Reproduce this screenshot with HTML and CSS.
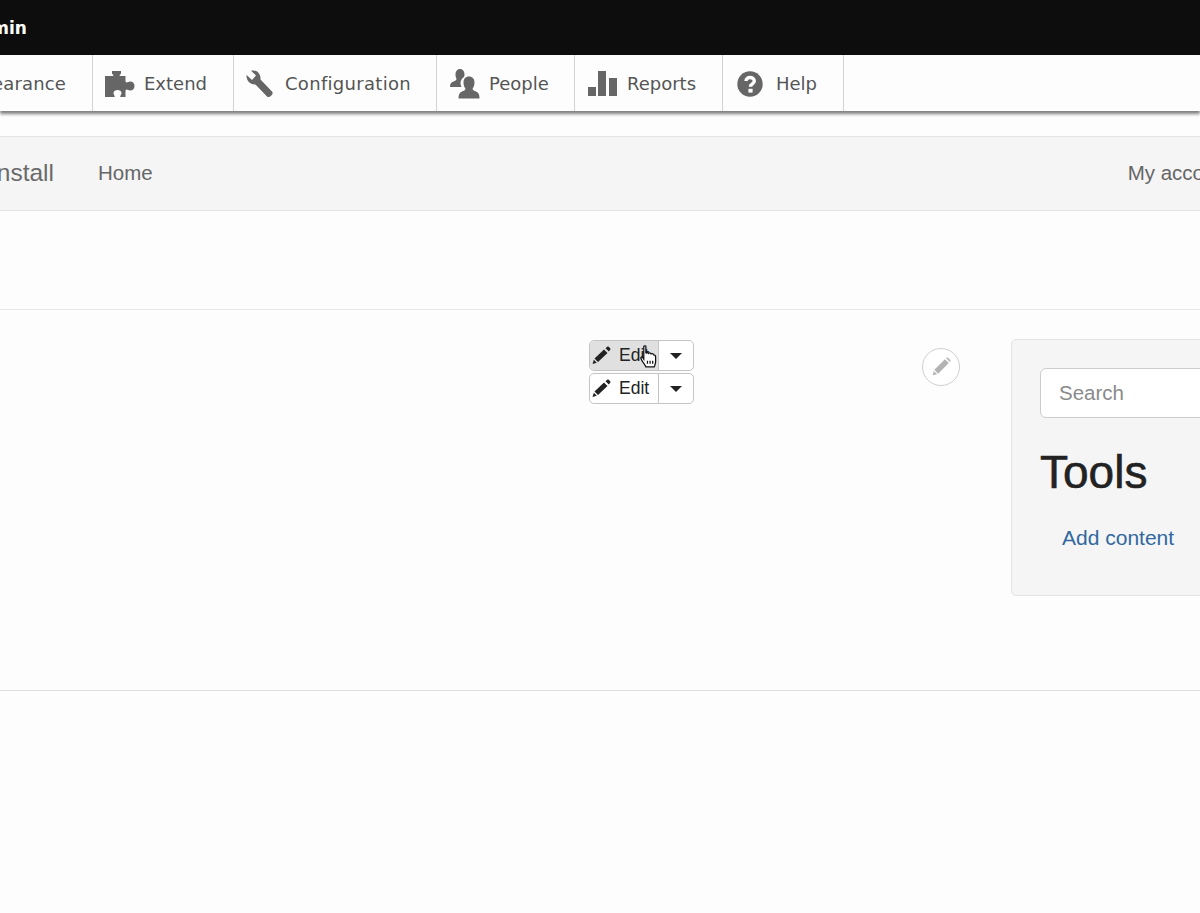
FILE: index.html
```html
<!DOCTYPE html>
<html lang="en">
<head>
<meta charset="utf-8">
<title>Admin</title>
<link rel="stylesheet" href="styles.css">
</head>
<body>
<header class="admin-bar"><span class="admin-name">Admin</span></header>
<nav class="toolbar">
  <a class="tool tool-first"><span class="tool-label">Appearance</span></a>
  <a class="tool tool-extend">
    <svg class="tool-icon" width="30" height="26" viewBox="0 0 30 26"><path d="M0 5H7.500C9 5 8.500 3.500 7 2.800V0H16V2.800C14.500 3.500 14 5 15.500 5H20.500V10.500C21.500 12.500 23 10.500 25 10.500C28 10.500 29.500 12.500 29.500 15C29.500 17.500 28 19.500 25 19.500C23 19.500 21.500 17.500 20.500 19.500V26H15.500C14.500 25 16.500 24 16.500 22C16.500 20 14.500 19 12.500 19C10.500 19 8.500 20 8.500 22C8.500 24 10.500 25 9.500 26H0Z"/></svg>
    <span class="tool-label">Extend</span>
  </a>
  <a class="tool tool-config">
    <svg class="tool-icon" width="28" height="28" viewBox="0 0 28 28"><path d="M5 .8L10 5.500L6 10L.6 5C0 10 4 15 9.500 14.500L21 26.500C23 28.500 28.500 24 26 21.500L14.500 9.500C15 4 11-1 5 .8Z"/></svg>
    <span class="tool-label">Configuration</span>
  </a>
  <a class="tool tool-people">
    <svg class="tool-icon" width="30" height="30" viewBox="0 0 30 30"><path d="M10 0C13 0 14.500 2.500 14.500 5.500C14.500 6.500 14.300 7.300 14 8C12 9 10.500 11.500 10.500 14C10.500 15.500 10.800 16.800 11.500 18H0C0 15 .8 13.500 3.500 12.500C5.500 11.800 6.500 11 6.500 9.500C5.500 8 5.500 6.500 5.500 5.500C5.500 2.500 7 0 10 0Z"/><path d="M19 7.500C22.500 7.500 24.500 10 24.500 13.500C24.500 16 23.800 18 22.600 19.500C22.600 21 23.500 21.500 25.500 22.300C28.500 23.300 29.500 25.500 29.500 29.500H8.500C8.500 25.500 9.500 23.300 12.500 22.300C14.500 21.500 15.400 21 15.400 19.500C14.200 18 13.500 16 13.500 13.500C13.500 10 15.500 7.500 19 7.500Z"/></svg>
    <span class="tool-label">People</span>
  </a>
  <a class="tool tool-reports">
    <svg class="tool-icon" width="30" height="26" viewBox="0 0 30 26"><path d="M0 16H8V25H0ZM10 0H18V25H10ZM21 7H29V25H21Z"/></svg>
    <span class="tool-label">Reports</span>
  </a>
  <a class="tool tool-help">
    <svg class="tool-icon" width="26" height="26" viewBox="0 0 26 26"><circle cx="13" cy="13" r="12.700"/><path class="help-mark" d="M9 10C9 7.500 11 6.500 13 6.500C15.500 6.500 17.300 8 17.300 10C17.300 13 13.500 12.800 13.500 15.800"/><rect class="help-dot" x="11.400" y="17.800" width="4.200" height="3.800"/></svg>
    <span class="tool-label">Help</span>
  </a>
</nav>
<nav class="site-nav">
  <span class="site-name">Drupal Install</span>
  <a class="site-home">Home</a>
  <a class="site-account">My account</a>
</nav>
<main class="content">
  <section class="main-col">
    <div class="edit-stack">
      <div class="edit-group edit-hover">
        <button class="edit-btn">
          <svg class="pencil" width="19" height="19" viewBox="0 0 19 19"><path d="M12 3.500L15.500 7L6 16L2.500 12.500ZM13.500 2.200L15.200 .8C15.700 .4 16.300 .4 16.700 .8L18.200 2.200C18.600 2.700 18.600 3.200 18.200 3.700L16.800 5.500ZM1.800 13.800L4.800 16.800L.5 18Z"/></svg>
          <span>Edit</span>
        </button>
        <button class="caret-btn"><span class="caret"></span></button>
        <svg class="hand" width="17" height="23" viewBox="0 0 16 22"><path d="M3.500 1.500C3.500 .5 5.500 .5 5.500 1.500V8C6 7 7.500 7 8 8C8.500 7.300 10 7.300 10.500 8.500C11 8 12.800 8 13 9.500C14 9.500 14.800 10 14.800 11.500V16C14.800 18 14 19 13.500 21H5.500C5 19 3.500 17.500 2 15.500L.8 13C.3 11.500 1.800 11 2.500 12L3.500 13.500Z"/><path d="M7 15V18M9.500 15V18M12 15V18"/></svg>
      </div>
      <div class="edit-group">
        <button class="edit-btn">
          <svg class="pencil" width="19" height="19" viewBox="0 0 19 19"><path d="M12 3.500L15.500 7L6 16L2.500 12.500ZM13.500 2.200L15.200 .8C15.700 .4 16.300 .4 16.700 .8L18.200 2.200C18.600 2.700 18.600 3.200 18.200 3.700L16.800 5.500ZM1.800 13.800L4.800 16.800L.5 18Z"/></svg>
          <span>Edit</span>
        </button>
        <button class="caret-btn"><span class="caret"></span></button>
      </div>
    </div>
    <span class="edit-circle">
      <svg width="20" height="20" viewBox="0 0 18 18"><path d="M12.500 2L16 5.500L6.500 15L3 11.500ZM13.800 .8C14.300 .3 15 .3 15.500 .8L17.200 2.500C17.700 3 17.700 3.700 17.200 4.200L17 4.500L13.500 1ZM2.500 12.500L5.500 15.500L1.500 16.500Z"/></svg>
    </span>
  </section>
  <aside class="sidebar">
    <input class="search" type="text" placeholder="Search">
    <h2 class="sidebar-title">Tools</h2>
    <a class="sidebar-link">Add content</a>
  </aside>
</main>
</body>
</html>
```
FILE: styles.css
```css
* { box-sizing: border-box; }
html, body { margin: 0; height: 913px; overflow: hidden; }
body {
  background: #fdfdfd;
  font-family: "Liberation Sans", Arial, sans-serif;
  width: 1200px;
}
.admin-bar {
  height: 55px;
  background: #0d0d0d;
  color: #fff;
  display: flex;
  align-items: center;
  padding-top: 1px;
  overflow: hidden;
}
.admin-name {
  font: bold 17px "DejaVu Sans", sans-serif;
  margin-left: -34px;
}
.toolbar {
  height: 56px;
  background: #fdfdfd;
  display: flex;
  overflow: hidden;
  box-shadow: 0 3px 3px rgba(60, 60, 60, .65);
  position: relative;
}
.tool {
  display: flex;
  align-items: center;
  flex: none;
  height: 56px;
  border-right: 1px solid #d2d2d2;
  color: #555;
  padding-top: 1px;
}
.tool-icon { fill: #666; flex: none; }
.tool-label {
  font: 18px "DejaVu Sans", sans-serif;
  letter-spacing: 0;
  white-space: nowrap;
}
.tool-first { width: 93px; justify-content: flex-end; padding-right: 26px; }
.tool-first .tool-label { letter-spacing: .15px; }
.tool-extend { width: 141px; padding-left: 12px; gap: 9px; }
.tool-config { width: 203px; padding-left: 12px; gap: 11px; }
.tool-config .tool-label { letter-spacing: .3px; }
.tool-people { width: 138px; padding-left: 13px; gap: 9px; }
.tool-reports { width: 148px; padding-left: 13px; gap: 9px; }
.tool-help { width: 121px; padding-left: 14px; gap: 13px; }
.help-mark { fill: none; stroke: #fdfdfd; stroke-width: 3.400; }
.help-dot { fill: #fdfdfd; }
.site-nav {
  margin-top: 25px;
  height: 75px;
  background: #f5f5f5;
  border-top: 1px solid #e4e4e4;
  border-bottom: 1px solid #e4e4e4;
  display: flex;
  align-items: center;
  padding-bottom: 2px;
  color: #666;
  overflow: hidden;
  white-space: nowrap;
}
.site-name {
  font-size: 24.500px;
  flex: none;
  width: 54px;
  direction: rtl;
  overflow: hidden;
  color: #6a6a6a;
}
.site-home { font-size: 20.500px; margin-left: 44px; color: #666; }
.site-account { font-size: 20.500px; margin-left: 975px; flex: none; color: #666; }
.content {
  margin-top: 98px;
  height: 382px;
  border-top: 1px solid #e9e9e9;
  border-bottom: 1px solid #dfdfdf;
  display: flex;
  align-items: flex-start;
  padding-top: 29px;
  overflow: hidden;
}
.main-col {
  width: 1011px;
  flex: none;
  display: flex;
  align-items: flex-start;
  padding-left: 589px;
}
.edit-stack { display: flex; flex-direction: column; gap: 2px; padding-top: 1px; }
.edit-group {
  position: relative;
  display: flex;
  width: 105px;
  height: 31px;
  background: #fff;
  border: 1px solid #c4c4c4;
  border-radius: 5px;
}
.edit-btn, .caret-btn {
  font: 17.500px "Liberation Sans", Arial, sans-serif;
  color: #222;
  background: transparent;
  border: 0;
  padding: 0;
  display: flex;
  align-items: center;
}
.edit-btn { width: 69px; padding-left: 2px; gap: 8px; border-right: 1px solid #c4c4c4; }
.caret-btn { flex: 1; justify-content: center; }
.pencil { fill: #222; flex: none; }
.caret {
  width: 0;
  height: 0;
  border-left: 6px solid transparent;
  border-right: 6px solid transparent;
  border-top: 6px solid #222;
}
.edit-hover .edit-btn { background: #e0e0e0; border-radius: 4px 0 0 4px; }
.hand {
  position: absolute;
  left: 50px;
  top: 4px;
  fill: #fff;
  stroke: #111;
  stroke-width: 1.200;
}
.edit-circle {
  width: 38px;
  height: 38px;
  margin: 9px 0 0 228px;
  border: 1px solid #cfcfcf;
  border-radius: 50%;
  background: #fff;
  display: flex;
  align-items: center;
  justify-content: center;
  flex: none;
}
.edit-circle svg { fill: #b3b3b3; }
.sidebar {
  width: 300px;
  flex: none;
  height: 257px;
  background: #f5f5f5;
  border: 1px solid #e3e3e3;
  border-radius: 5px;
  padding: 28px 0 0 28px;
}
.search {
  display: block;
  width: 260px;
  height: 50px;
  border: 1px solid #ccc;
  border-radius: 6px;
  background: #fff;
  padding: 0 18px;
  font: 20.500px "Liberation Sans", Arial, sans-serif;
}
.search::placeholder { color: #8a8a8a; opacity: 1; }
.sidebar-title {
  margin: 29px 0 0;
  font-size: 46px;
  line-height: 50px;
  font-weight: normal;
  color: #222;
  -webkit-text-stroke: .6px #222;
}
.sidebar-link {
  display: block;
  margin: 29px 0 0 22px;
  font-size: 21px;
  line-height: 24px;
  color: #31689f;
}
```
